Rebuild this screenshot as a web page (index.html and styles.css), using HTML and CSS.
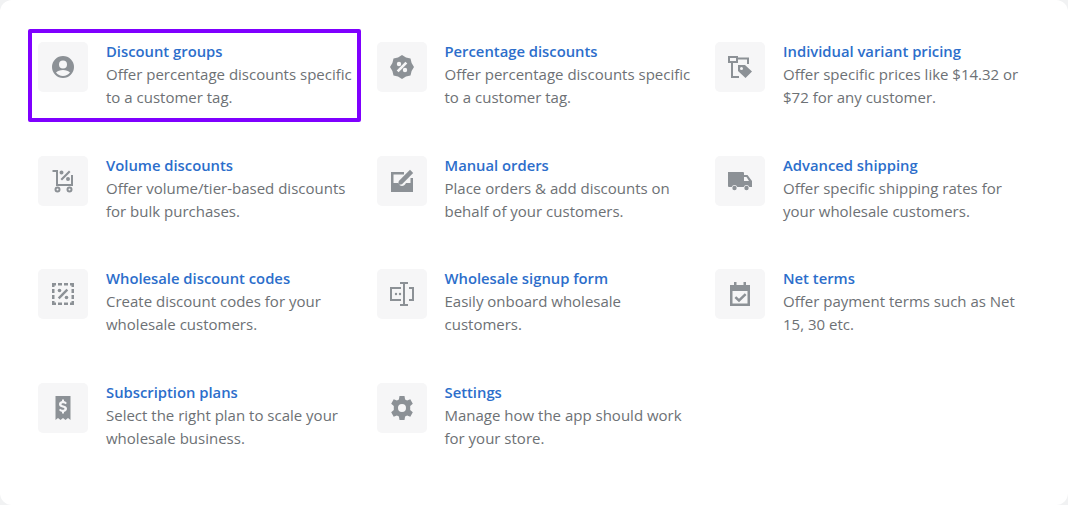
FILE: index.html
```html
<!DOCTYPE html>
<html lang="en">
<head>
<meta charset="utf-8">
<title>Features</title>
<link rel="stylesheet" href="styles.css">
</head>
<body>
<main class="card">
<div class="grid">
<a class="item selected"><span class="tile"><svg viewBox="0 0 24 24"><path d="M12 1a11 11 0 1 0 0 22 11 11 0 0 0 0-22zm0 4.500a4 4 0 1 1 0 8 4 4 0 0 1 0-8zm0 15.500a9 9 0 0 1-7-3.400c1.400-1.700 4-2.600 7-2.600s5.600.9 7 2.600a9 9 0 0 1-7 3.400z"/></svg></span><span class="text"><b>Discount groups</b><span>Offer percentage discounts specific to a customer tag.</span></span></a>
<a class="item"><span class="tile"><svg viewBox="0 0 24 24"><path fill-rule="evenodd" d="M12 0L16 2.400 20.500 3.500 21.600 8 24 12 21.600 16 20.500 20.500 16 21.600 12 24 8 21.600 3.500 20.500 2.400 16 0 12 2.400 8 3.500 3.500 8 2.400zM15.400 6.700L6.700 15.400l1.900 1.900L17.300 8.600zM9 6.800a2.200 2.200 0 1 0 0 4.400 2.200 2.200 0 0 0 0-4.400zM15 12.800a2.200 2.200 0 1 0 0 4.400 2.200 2.200 0 0 0 0-4.400z"/></svg></span><span class="text"><b>Percentage discounts</b><span>Offer percentage discounts specific to a customer tag.</span></span></a>
<a class="item"><span class="tile"><svg viewBox="0 0 24 24"><path fill-rule="evenodd" d="M0 1h10v7H5v13h6v2H3V8H0zm2 2v3h6V3z"/><path d="M10 2.500h11V9h-2V4.500h-9z"/><path fill-rule="evenodd" d="M10 10h7l7 6.500-6.500 6.500-7.500-7zm3.500 2a1.500 1.500 0 1 0 0 3 1.500 1.500 0 0 0 0-3z"/></svg></span><span class="text"><b>Individual variant pricing</b><span>Offer specific prices like $14.32 or $72 for any customer.</span></span></a>
<a class="item"><span class="tile"><svg viewBox="0 0 24 24"><path fill-rule="evenodd" d="M1.500 1h5.500v14h13V6h2v11H5V3H1.500zM6.500 17.500a3 3 0 1 1 0 6 3 3 0 0 1 0-6zm12 0a3 3 0 1 1 0 6 3 3 0 0 1 0-6zm-12 2a1 1 0 1 0 0 2 1 1 0 0 0 0-2zm12 0a1 1 0 1 0 0 2 1 1 0 0 0 0-2z"/><path d="M18 1.500l1.500 1.500-8.500 8.500-1.500-1.500zM10.500 1.500a2 2 0 1 1 0 4 2 2 0 0 1 0-4zM17 8a2 2 0 1 1 0 4 2 2 0 0 1 0-4z"/></svg></span><span class="text"><b>Volume discounts</b><span>Offer volume/tier-based discounts for bulk purchases.</span></span></a>
<a class="item"><span class="tile"><svg viewBox="0 0 24 24"><path d="M1 3h13v2.500H3.500V14H8c1 2 2.400 3 4 3s3-1 4-3h4.500V9H23v14H1z"/><path d="M20 .8L23.200 4 12 15.200l-4 .8.800-4z"/></svg></span><span class="text"><b>Manual orders</b><span>Place orders &amp; add discounts on behalf of your customers.</span></span></a>
<a class="item"><span class="tile"><svg viewBox="0 0 24 24"><path fill-rule="evenodd" d="M0 3h15a1 1 0 0 1 1 1v2h3.500l4.500 6v6h-2.700a3 3 0 0 0-5.600 0H9.300a3 3 0 0 0-5.600 0H1a1 1 0 0 1-1-1zm16 5v4h5l-2.500-4z"/><circle cx="6.500" cy="19" r="2.200"/><circle cx="18.500" cy="19" r="2.200"/></svg></span><span class="text"><b>Advanced shipping</b><span>Offer specific shipping rates for your wholesale customers.</span></span></a>
<a class="item"><span class="tile"><svg viewBox="0 0 24 24"><path d="M1 1h4v2.500H3.500V5H1zM7 1h4v2.500H7zM13 1h4v2.500h-4zM19 1h4v4h-2.500V3.500H19zM1 7h2.500v4H1zM20.500 7H23v4h-2.500zM1 13h2.500v4H1zM20.500 13H23v4h-2.500zM1 19h2.500v1.500H5V23H1zM7 20.500h4V23H7zM13 20.500h4V23h-4zM20.500 19H23v4h-4v-2.500h1.500z"/><path d="M15.500 6.800l1.700 1.700-8.700 8.700-1.700-1.700z"/><circle cx="8.500" cy="8.500" r="1.800"/><circle cx="15.500" cy="15.500" r="1.800"/></svg></span><span class="text"><b>Wholesale discount codes</b><span>Create discount codes for your wholesale customers.</span></span></a>
<a class="item"><span class="tile"><svg viewBox="0 0 24 24"><path d="M0 5h11v2H2v10h9v2H0zM19 5h5v14h-5v-2h3V7h-3z"/><path d="M10 0h8v2h-3v20h3v2h-8v-2h3V2h-3z"/><circle cx="6" cy="12" r="1.200"/><circle cx="10" cy="12" r="1.200"/></svg></span><span class="text"><b>Wholesale signup form</b><span>Easily onboard wholesale customers.</span></span></a>
<a class="item"><span class="tile"><svg viewBox="0 0 24 24"><path fill-rule="evenodd" d="M6 0h2.500v3h7V0H18v3h4v21H2V3h4zM4.500 9v12.500h15V9zM16.800 11.200l1.700 1.700-7.500 7.300-4.500-4.200 1.700-1.800 2.800 2.600z"/></svg></span><span class="text"><b>Net terms</b><span>Offer payment terms such as Net 15, 30 etc.</span></span></a>
<a class="item"><span class="tile"><svg viewBox="0 0 24 24"><path fill-rule="evenodd" d="M4.500 0h15v24l-2.500-2-2.500 2-2.500-2-2.500 2-2.500-2-2.500 2zM11 3.500v1.600c-1.700.3-3 1.500-3 3.100 0 2 1.600 2.700 3.500 3.200 1.400.4 2 .7 2 1.400 0 .6-.7 1-1.700 1-1.100 0-2-.5-2.500-1.100L8 14.100c.6.900 1.700 1.500 3 1.800v1.600h2v-1.600c1.700-.3 3-1.500 3-3.100 0-2-1.600-2.700-3.500-3.200-1.400-.4-2-.7-2-1.400 0-.6.7-1 1.700-1 1 0 1.800.4 2.300 1l1.400-1.300c-.7-.9-1.600-1.500-2.900-1.800V3.500z"/></svg></span><span class="text"><b>Subscription plans</b><span>Select the right plan to scale your wholesale business.</span></span></a>
<a class="item"><span class="tile"><svg viewBox="0 0 24 24"><path fill-rule="evenodd" d="M9.500 0h5l.6 3.400 2 1.100L20.300 3.300l2.500 4.400-2.600 2.200v4.200l2.600 2.200-2.500 4.400-3.200-1.200-2 1.100-.6 3.400h-5l-.6-3.400-2-1.100-3.200 1.200-2.500-4.400 2.600-2.200V9.900L1.200 7.700l2.500-4.400 3.200 1.200 2-1.100zM12 8a4 4 0 1 0 0 8 4 4 0 0 0 0-8z"/></svg></span><span class="text"><b>Settings</b><span>Manage how the app should work for your store.</span></span></a>
</div>
</main>
</body>
</html>
```
FILE: styles.css
```css
* { box-sizing: border-box; }
html, body { margin: 0; height: 505px; background: #f1f2f3; overflow: hidden; }
.card {
  height: 505px;
  background: #fff;
  border-radius: 12px;
  padding: 29px 0 0 28px;
  font-family: "Open Sans", "Noto Sans", sans-serif;
}
.grid {
  display: grid;
  grid-template-columns: repeat(3, 333px);
  grid-auto-rows: 93px;
  column-gap: 5.5px;
  row-gap: 20.6px;
}
.item {
  display: flex;
  gap: 18px;
  padding: 9px 2px 0 6px;
  border: 4px solid transparent;
}
.item.selected { border-color: #7f00ff; border-radius: 2px; }
.tile {
  flex: none;
  width: 50px;
  height: 50px;
  background: #f6f6f7;
  border-radius: 5px;
  display: flex;
  align-items: center;
  justify-content: center;
}
.tile svg { width: 24px; height: 24px; fill: #8c9196; }
.text {
  display: flex;
  flex-direction: column;
  margin-top: -2px;
  font-size: 15px;
  line-height: 23px;
  color: #6d7175;
}
.text b { font-size: 14.800px; font-weight: 600; color: #2c6ecb; }
```
